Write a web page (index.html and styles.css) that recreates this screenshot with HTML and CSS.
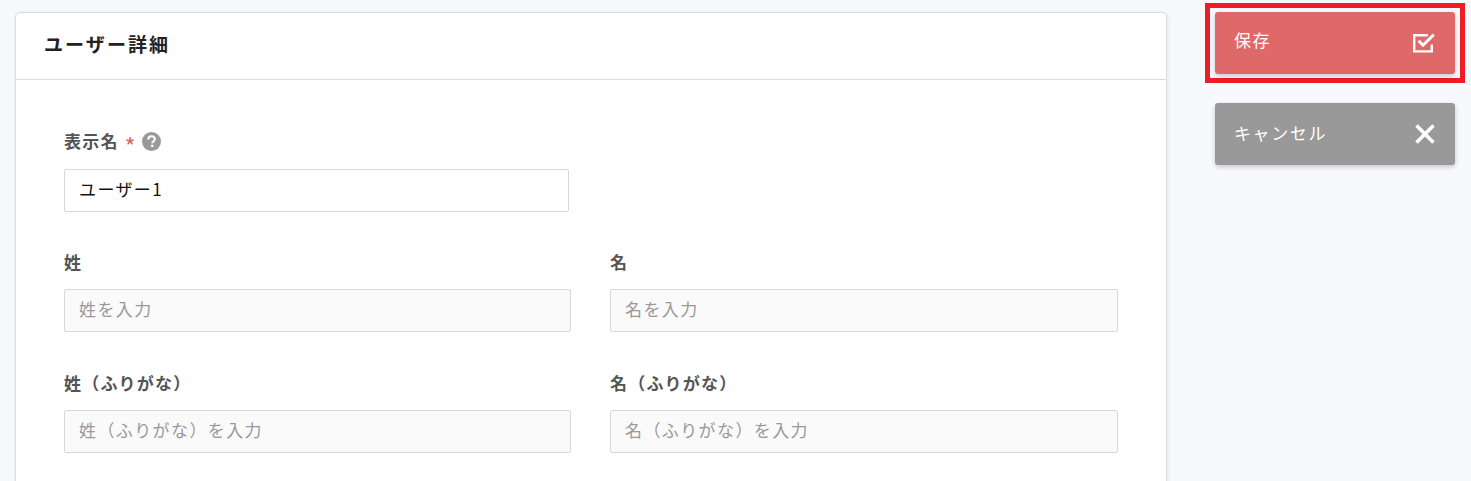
FILE: index.html
```html
<!DOCTYPE html>
<html lang="ja">
<head>
<meta charset="UTF-8" />
<meta name="viewport" content="width=device-width, initial-scale=1.0"/>
<title>ユーザー詳細</title>
<link rel="stylesheet" href="styles.css">
</head>
<body>

<div class="page">
  <main class="card">
    <h2 class="card-title">ユーザー詳細</h2>
    <div class="card-body">
      <div class="field field-name">
        <label class="field-label">表示名<span class="required">*</span>
          <svg class="help-icon" viewBox="0 0 20 20" width="19" height="19">
            <circle cx="10" cy="10" r="10" fill="#999"/>
            <path d="M6.6 7.9c0-2.1 1.4-3.4 3.5-3.4 2 0 3.4 1.2 3.4 2.9 0 1.4-.8 2-1.6 2.6-.8.6-1.1 1-1.1 1.9" fill="none" stroke="#fff" stroke-width="2.2"/>
            <rect x="9.6" y="13.4" width="2.4" height="2.4" fill="#fff"/>
          </svg>
        </label>
        <input class="input" type="text" value="ユーザー1">
      </div>

      <div class="form-row">
        <div class="field">
          <label class="field-label">姓</label>
          <input class="input input-empty" type="text" placeholder="姓を入力">
        </div>
        <div class="field">
          <label class="field-label">名</label>
          <input class="input input-empty" type="text" placeholder="名を入力">
        </div>
      </div>

      <div class="form-row">
        <div class="field">
          <label class="field-label">姓（ふりがな）</label>
          <input class="input input-empty" type="text" placeholder="姓（ふりがな）を入力">
        </div>
        <div class="field">
          <label class="field-label">名（ふりがな）</label>
          <input class="input input-empty" type="text" placeholder="名（ふりがな）を入力">
        </div>
      </div>
    </div>
  </main>

  <aside class="actions">
    <div class="highlight">
      <button class="btn btn-save"><span class="btn-text">保存</span>
        <svg viewBox="0 0 22 20" width="22" height="20">
          <path d="M15 2.2H1.2v16.2h17.6v-7" fill="none" stroke="#fff" stroke-width="2.4"/>
          <path d="M5.6 7.6l4.4 4.6L20.8 1.6" fill="none" stroke="#fff" stroke-width="3"/>
        </svg>
      </button>
    </div>
    <button class="btn btn-cancel"><span class="btn-text">キャンセル</span>
      <svg viewBox="0 0 20 20" width="20" height="20">
        <path d="M1.5 1.5l17 17M18.5 1.5l-17 17" fill="none" stroke="#fff" stroke-width="3.6"/>
      </svg>
    </button>
  </aside>
</div>

</body>
</html>
```

FILE: styles.css
```css
html, body {
  height: 100%;
}

body {
  margin: 0;
  padding: 0;
  background: #f8f9fd;
  font-family: "Noto Sans CJK JP", "Noto Sans", sans-serif;
  overflow: hidden;
}

.page {
  display: flex;
  align-items: flex-start;
  padding: 12px 0 0 15px;
}

/* カード */
.card {
  width: 1152px;
  height: 600px;
  box-sizing: border-box;
  flex-shrink: 0;
  background: #fff;
  border: 1px solid #dcdcdc;
  border-radius: 5px;
  box-shadow: 1px 1px 4px rgba(0,0,0,0.08);
}

.card-title {
  margin: 0;
  height: 66px;
  padding-left: 28px;
  line-height: 62px;
  font-size: 19px;
  font-weight: 700;
  letter-spacing: 2.1px;
  color: #222;
  border-bottom: 1px solid #dcdcdc;
}

.card-body {
  padding: 48px 48px 0 48px;
}

.field-name {
  width: 505px;
  margin-bottom: 37px;
}

.form-row {
  display: grid;
  grid-template-columns: 507px 508px;
  column-gap: 39px;
  margin-bottom: 38px;
}

.field-label {
  display: flex;
  align-items: center;
  height: 26px;
  box-sizing: border-box;
  padding-bottom: 2px;
  margin-bottom: 14px;
  font-size: 17px;
  font-weight: 700;
  letter-spacing: 1.2px;
  color: #555;
  white-space: pre;
}

.field-name .field-label {
  margin-bottom: 15px;
}

.required {
  margin: 12px 7px 0 6px;
  font-size: 24px;
  line-height: 1;
  font-weight: 400;
  letter-spacing: 0;
  color: #e06666;
}

.help-icon {
  margin: 2px 0 0 -1px;
}

.input {
  display: block;
  width: 100%;
  height: 43px;
  box-sizing: border-box;
  padding: 0 14px 4px;
  font-family: inherit;
  font-size: 17px;
  letter-spacing: 1.4px;
  color: #111;
  background: #fff;
  border: 1px solid #d8d8d8;
  border-radius: 2px;
}

.input-empty {
  background: #fafafa;
}

.input::placeholder {
  color: #999;
  opacity: 1;
}

/* ボタン */
.actions {
  display: flex;
  flex-direction: column;
  margin-left: 38px;
  margin-top: -9px;
}

.highlight {
  border: 5px solid #ee1c25;
  padding: 4px 5px;
  margin-bottom: 20px;
}

.btn {
  display: flex;
  align-items: center;
  justify-content: space-between;
  width: 240px;
  height: 62px;
  padding: 0 20px 0 19px;
  box-sizing: border-box;
  font-family: inherit;
  font-size: 17px;
  letter-spacing: 1.6px;
  color: #fff;
  border: none;
  border-radius: 3px;
  box-shadow: 0 2px 5px rgba(0,0,0,0.2);
}

.btn-text {
  padding-bottom: 3px;
}

.btn-save {
  background: #df6868;
}

.btn-save .btn-text {
  padding-bottom: 8px;
}

.btn-cancel {
  margin-left: 10px;
  background: #999;
}
```
